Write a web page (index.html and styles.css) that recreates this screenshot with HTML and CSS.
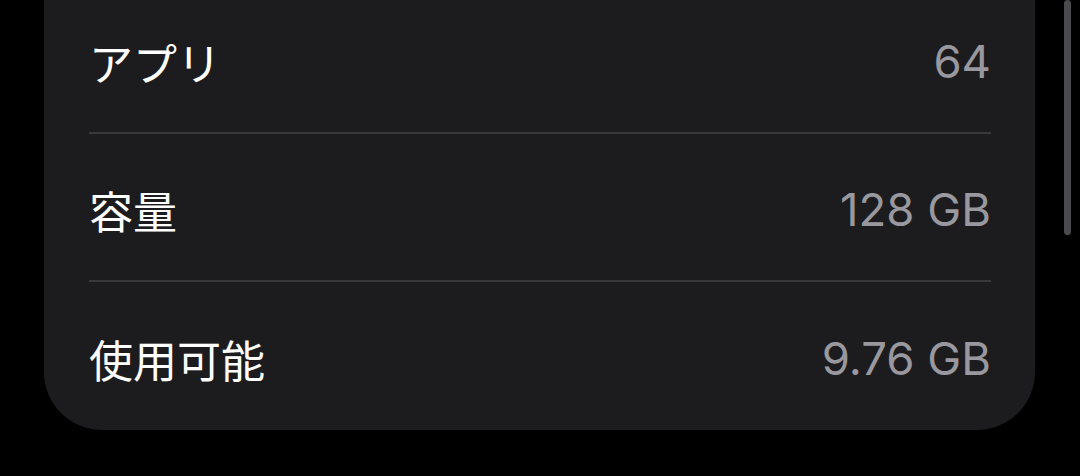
FILE: index.html
```html
<!DOCTYPE html>
<html lang="ja">
<head>
<meta charset="utf-8">
<link rel="stylesheet" href="styles.css">
</head>
<body>
<div class="screen">
  <div class="card">
    <div class="row"><span class="label">アプリ</span><span class="value">64</span></div>
    <div class="row"><span class="label">容量</span><span class="value">128 GB</span></div>
    <div class="row last"><span class="label">使用可能</span><span class="value">9.76 GB</span></div>
  </div>
  <div class="scrollbar"></div>
</div>
</body>
</html>
```
FILE: styles.css
```css
html, body {
  margin: 0;
  padding: 0;
  background: #000;
}
.screen {
  position: relative;
  width: 1080px;
  height: 476px;
  overflow: hidden;
  font-family: Inter, "Noto Sans CJK JP", sans-serif;
}
.card {
  margin-top: -14px;
  margin-left: 44px;
  width: 991px;
  box-sizing: border-box;
  padding: 0 44px 0 45px;
  background: #1c1c1e;
  border-radius: 0 0 58px 58px;
}
.row {
  height: 148px;
  display: flex;
  align-items: center;
  justify-content: space-between;
  border-bottom: 2px solid #38383a;
  box-sizing: border-box;
  padding-top: 5px;
}
.row.last {
  border-bottom: none;
}
.label {
  color: #fff;
  font-size: 44px;
  font-family: "Noto Sans CJK JP", sans-serif;
}
.value {
  color: #98989e;
  font-size: 45.5px;
  font-family: Inter, sans-serif;
}
.scrollbar {
  position: absolute;
  top: 0;
  left: 1064px;
  width: 7px;
  height: 235px;
  border-radius: 4px;
  background: #4a4a4c;
}
```
